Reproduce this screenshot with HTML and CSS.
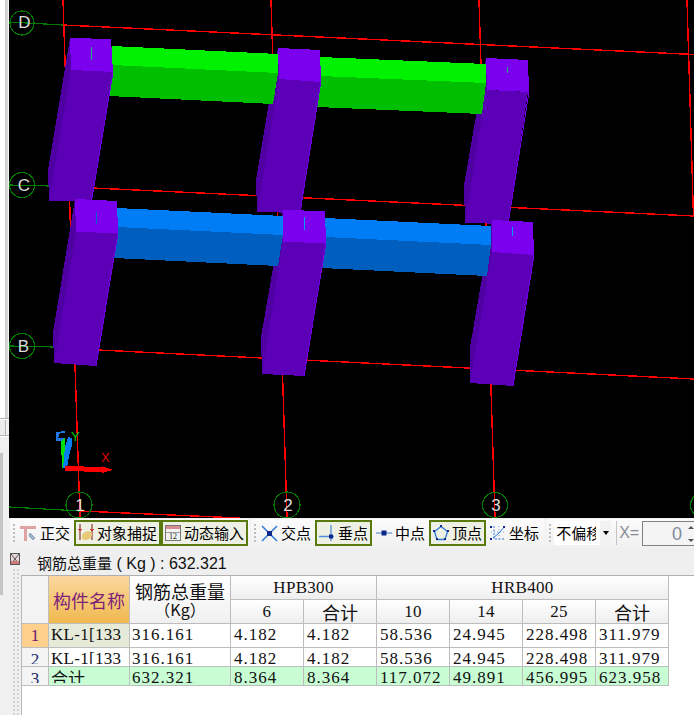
FILE: index.html
```html
<!DOCTYPE html>
<html lang="zh">
<head>
<meta charset="utf-8">
<title>钢筋三维</title>
<link rel="stylesheet" href="styles.css">
</head>
<body>
<div class="app">
  <aside class="rail">
    <div class="rail-top"></div>
    <div class="rail-box"></div>
    <div class="rail-panel"><div class="rail-scroll"></div></div>
  </aside>
  <main class="main">
    <svg class="scene" width="685" height="518" viewBox="9 0 685 518" xmlns="http://www.w3.org/2000/svg">
      <g class="grid-red">
        <polyline points="63,25 694,54.5"/>
        <polyline points="93,188 694,216"/>
        <polyline points="98,350 694,379"/>
        <polyline points="80,511 240,518"/>
        <polyline points="63,0 80,518"/>
        <polyline points="271,0 287,518"/>
        <polyline points="479,0 495,518"/>
        <polyline points="687,0 693.5,217"/>
      </g>
      <g class="grid-green">
        <polyline points="9,22 63,25"/>
        <polyline points="9,185 50,186"/>
        <polyline points="9,346 54,347"/>
        <polyline points="9,507 80,511"/>
        <circle cx="22" cy="23" r="12"/>
        <circle cx="22" cy="185" r="12.5"/>
        <circle cx="22" cy="346" r="12.5"/>
        <circle cx="79" cy="505" r="13"/>
        <circle cx="287" cy="505" r="13"/>
        <circle cx="495" cy="505" r="12.5"/>
        <circle cx="703" cy="505" r="12.5"/>
      </g>
      <g class="side">
        <polygon points="70,38 71,70 49,201 48,170"/>
        <polygon points="278,48 279,79 257,212 256,180"/>
        <polygon points="486,58 487,90 465,223 464,185"/>
      </g>
      <polygon class="beam-g-top" points="112,46 278,54 278,73 112,65"/>
      <polygon class="beam-g-low" points="112,65 278,73 273,104 109,96"/>
      <polygon class="beam-g-top" points="320,57 486,64 486,83 320,76"/>
      <polygon class="beam-g-low" points="320,76 486,83 482,114 317,107"/>
      <g class="front">
        <polygon points="71,70 113,72 91.5,201 49,201"/>
        <polygon points="279,79 321,81 300,213 257,212"/>
        <polygon points="486,90 528,92 508,224 465,223"/>
      </g>
      <g class="edge">
        <polyline points="113,72 91.5,201"/>
        <polyline points="321,81 300,213"/>
        <polyline points="529,92 508,224"/>
      </g>
      <g class="cap">
        <polygon points="70,38 111,39 113,72 71,70"/>
        <polygon points="278,48 320,50 321,82 279,79"/>
        <polygon points="486,58 528,60 529,92 487,90"/>
      </g>
      <g class="side">
        <polygon points="75,199 76,232 54,363 53,332"/>
        <polygon points="283,210 283,242 262,374 261,337"/>
        <polygon points="492,220 492,252 470,383 470,347"/>
      </g>
      <polygon class="beam-b-top" points="117,208 283,216 283,235 117,227"/>
      <polygon class="beam-b-low" points="117,227 283,235 278,266 114,258"/>
      <polygon class="beam-b-top" points="325,218 491,226 491,245 325,237"/>
      <polygon class="beam-b-low" points="325,237 491,245 487,276 322,268"/>
      <g class="front">
        <polygon points="76,232 118,233 96,366 54,363"/>
        <polygon points="283,242 326,243 304,376 262,374"/>
        <polygon points="492,252 534,255 513,386 470,383"/>
      </g>
      <g class="edge">
        <polyline points="118,233 96,366"/>
        <polyline points="326,243 304,376"/>
        <polyline points="534,255 513,386"/>
      </g>
      <g class="cap">
        <polygon points="75,199 117,201 118,233 76,232"/>
        <polygon points="283,210 325,211 326,243 283,242"/>
        <polygon points="492,220 533,222 534,255 492,252"/>
      </g>
      <line class="tick-g" x1="91.5" y1="47" x2="91.5" y2="60"/>
      <line class="tick-g" x1="507.5" y1="67" x2="507.5" y2="73"/>
      <line class="tick-b" x1="96.5" y1="212" x2="96.5" y2="224"/>
      <line class="tick-c" x1="304.5" y1="217" x2="304.5" y2="230"/>
      <line class="tick-c" x1="512.5" y1="227" x2="512.5" y2="236"/>
      <g class="axis">
        <polygon class="ax-cyan" points="56,432 65,431 65,433 60,433 58,438 65,438 65,441 56,441"/>
        <polygon class="ax-green" points="61,441 65,438 67,468 62,468"/>
        <polygon class="ax-blue" points="68,437 72,438 72,445 69,456 67,468 63,468 65,447"/>
        <polygon class="ax-red" points="65,466 102,467 102,466 113,470 102,473 102,472 65,471"/>
        <text class="ax-x" x="101" y="462">X</text>
        <text class="ax-y" x="71" y="441">Y</text>
      </g>
      <g class="grid-label">
        <text x="24.5" y="28">D</text>
        <text x="24" y="191">C</text>
        <text x="23.5" y="352">B</text>
        <text x="80" y="511">1</text>
        <text x="288" y="511">2</text>
        <text x="496" y="511">3</text>
      </g>
    </svg>

    <div class="toolbar">
      <div class="tb">
        <span class="grip"></span>
        <div class="tool">
          <svg width="17" height="18" viewBox="0 0 17 18"><path d="M0 2h16v3H7v12H4V5H0z" fill="#e0a3a3"/><path d="M10 9l5 5-2 2-4-4z" fill="#9db1cc" stroke="#6d7d95" stroke-width=".6"/></svg>
          <span>正交</span>
        </div>
        <div class="tool on">
          <svg width="16" height="20" viewBox="0 0 16 20"><path d="M2 1v16M14 1v16" stroke="#8a3a2a" stroke-width="1.2"/><path d="M0 6l2 2 2-2M12 6l2 2 2-2" fill="#c33" stroke="#c33" stroke-width=".8"/><path d="M4 13c1-5 8-6 10-3 1 3-2 7-6 7-3 0-5-1-4-4z" fill="#e8c978"/></svg>
          <span>对象捕捉</span>
        </div>
        <div class="tool on">
          <svg width="16" height="18" viewBox="0 0 16 18"><rect x=".5" y="1.500" width="15" height="15" fill="#f2f2f2" stroke="#777"/><rect x="1" y="2" width="14" height="3" fill="#d98f8f"/><rect x="1" y="8" width="14" height="1" fill="#999"/><text class="ico-num" x="8" y="15">12</text></svg>
          <span>动态输入</span>
        </div>
      </div>
      <div class="tb">
        <span class="grip"></span>
        <div class="tool">
          <svg width="17" height="17" viewBox="0 0 17 17"><path d="M1 1l15 15M16 1L1 16" stroke="#2f79d6" stroke-width="1.500"/><rect x="6" y="6" width="5" height="5" fill="#10288c"/></svg>
          <span>交点</span>
        </div>
        <div class="tool on">
          <svg width="16" height="17" viewBox="0 0 16 17"><path d="M0 11.500h15M12 0v16" stroke="#4d8fd8" stroke-width="1.300"/><rect x="10" y="9.500" width="4" height="4" fill="#10288c"/></svg>
          <span>垂点</span>
        </div>
        <div class="tool">
          <svg width="16" height="8" viewBox="0 0 16 8"><path d="M0 4h16" stroke="#7fa9dc" stroke-width="1.500"/><rect x="5.500" y="1.500" width="5" height="5" fill="#10288c"/></svg>
          <span>中点</span>
        </div>
        <div class="tool on">
          <svg width="16" height="16" viewBox="0 0 16 16"><path d="M8 1.500l6.500 5-2.500 8H4l-2.500-8z" fill="none" stroke="#2f79d6" stroke-width="1.300"/><g fill="#10288c"><rect x="7" y="0" width="2" height="2"/><rect x="0" y="5" width="2" height="2"/><rect x="14" y="5" width="2" height="2"/><rect x="3" y="13" width="2" height="2"/><rect x="11" y="13" width="2" height="2"/></g></svg>
          <span>顶点</span>
        </div>
        <div class="tool">
          <svg width="16" height="16" viewBox="0 0 16 16"><path d="M4 1v13h11" fill="none" stroke="#2f79d6" stroke-dasharray="2 1.500"/><path d="M1 7h14M9 1v13" fill="none" stroke="#7fa9dc" stroke-dasharray="1 2"/><path d="M3 13L9 8l5-6" fill="none" stroke="#2f79d6"/><g fill="#10288c"><rect x="0" y="13" width="2" height="2"/><rect x="13" y="1" width="2" height="2"/><rect x="0" y="1" width="2" height="2"/></g></svg>
          <span>坐标</span>
        </div>
      </div>
      <div class="tb tb-last">
        <span class="grip"></span>
        <div class="select"><span class="select-text">不偏移</span><span class="select-btn"></span></div>
        <span class="sep"></span>
        <span class="xlabel">X=</span>
        <div class="num"><span class="num-val">0</span><span class="spin"></span></div>
      </div>
    </div>

    <div class="lower">
      <div class="gutter">
        <svg class="close-ico" width="10" height="12" viewBox="0 0 10 12"><rect x=".5" y=".5" width="9" height="11" fill="#e8d8d8" stroke="#555"/><path d="M1 1l8 10M9 1L1 11" stroke="#555"/><path d="M1 8h8v3H1z" fill="#d07a7a"/></svg>
        <div class="dots"></div>
      </div>
      <div class="content">
        <div class="title"><span>钢筋总重量</span><span class="title-en"> ( Kg ) : 632.321</span></div>
        <div class="sheet">
          <div class="grid">
            <div class="c corner r2"></div>
            <div class="c h-name r2">构件名称</div>
            <div class="c h h-total r2"><span>钢筋总重量</span><span class="unit">（Kg）</span></div>
            <div class="c h h-en s2">HPB300</div>
            <div class="c h h-en s4">HRB400</div>
            <div class="c h h-en">6</div>
            <div class="c h h-cn">合计</div>
            <div class="c h h-en">10</div>
            <div class="c h h-en">14</div>
            <div class="c h h-en">25</div>
            <div class="c h h-cn">合计</div>

            <div class="c idx idx-on">1</div>
            <div class="c d name-on"><div class="v v-full v2 code">KL-1[133</div></div>
            <div class="c d"><div class="v v-full v2">316.161</div></div>
            <div class="c d"><div class="v v-full">4.182</div></div>
            <div class="c d"><div class="v v-full">4.182</div></div>
            <div class="c d"><div class="v v-full">58.536</div></div>
            <div class="c d"><div class="v v-full">24.945</div></div>
            <div class="c d"><div class="v v-full">228.498</div></div>
            <div class="c d"><div class="v v-full">311.979</div></div>

            <div class="c idx"><div class="n">2</div></div>
            <div class="c d"><div class="v v2 code">KL-1[133</div></div>
            <div class="c d"><div class="v v2">316.161</div></div>
            <div class="c d"><div class="v">4.182</div></div>
            <div class="c d"><div class="v">4.182</div></div>
            <div class="c d"><div class="v">58.536</div></div>
            <div class="c d"><div class="v">24.945</div></div>
            <div class="c d"><div class="v">228.498</div></div>
            <div class="c d"><div class="v">311.979</div></div>

            <div class="c idx"><div class="n">3</div></div>
            <div class="c d sum"><div class="v v2 cn">合计</div></div>
            <div class="c d sum"><div class="v v2">632.321</div></div>
            <div class="c d sum"><div class="v">8.364</div></div>
            <div class="c d sum"><div class="v">8.364</div></div>
            <div class="c d sum"><div class="v">117.072</div></div>
            <div class="c d sum"><div class="v">49.891</div></div>
            <div class="c d sum"><div class="v">456.995</div></div>
            <div class="c d sum"><div class="v">623.958</div></div>
          </div>
        </div>
      </div>
    </div>
  </main>
</div>
</body>
</html>
```
FILE: styles.css
```css
* { box-sizing: border-box; }
html, body { margin: 0; padding: 0; }
body {
  width: 694px;
  height: 715px;
  overflow: hidden;
  background: #f0f0f0;
  font-family: "Noto Sans CJK SC", "Liberation Sans", sans-serif;
  color: #000;
}
.app { display: flex; width: 694px; height: 715px; }

/* left rail */
.rail { width: 9px; flex: none; display: flex; flex-direction: column; background: #fff; }
.rail-top { height: 419px; background: linear-gradient(to right, #fff 5px, #c9c9c9 5px, #dcdcdc 8px, #f4f4f4 8px); border-bottom: 1px solid #b5b5b5; }
.rail-box { height: 16px; margin-top: 1px; background: linear-gradient(to right, #ececec 5px, #b5b5b5 5px, #b5b5b5 6px, #f0f0f0 6px); border-bottom: 1px solid #b5b5b5; }
.rail-panel { flex: 1; padding-top: 16px; background: #f0f0f0; border-top: 1px solid #fff; }
.rail-scroll { width: 3px; height: 142px; background: #c4c4c4; }

.main { width: 685px; flex: none; display: flex; flex-direction: column; overflow: hidden; }

/* 3D scene */
.scene { display: block; flex: none; background: #000; shape-rendering: crispEdges; }
.grid-red polyline { fill: none; stroke: #f00; stroke-width: 1.4; }
.grid-green polyline, .grid-green circle { fill: none; stroke: #007a00; stroke-width: 1.2; }
.side polygon { fill: #4e00a3; }
.front polygon { fill: #5c00b8; }
.cap polygon { fill: #7a00ee; }
.edge polyline { fill: none; stroke: #7000e0; stroke-width: 1; }
.beam-g-top { fill: #00f200; }
.beam-g-low { fill: #00bf00; }
.beam-b-top { fill: #007cf5; }
.beam-b-low { fill: #005fbe; }
.tick-g { stroke: #20b080; stroke-width: 1; }
.tick-b { stroke: #0060d0; stroke-width: 1; }
.tick-c { stroke: #00a0f0; stroke-width: 1; }
.ax-cyan { fill: #1e78e6; }
.ax-green { fill: #00e000; }
.ax-blue { fill: #0080f0; }
.ax-red { fill: #f00; }
.ax-x, .ax-y { font-family: "Liberation Sans", sans-serif; font-size: 13px; text-anchor: start; }
.ax-x { fill: #e00000; }
.ax-y { fill: #00d000; }
.grid-label text {
  font-family: "Liberation Sans", sans-serif;
  font-size: 17px;
  fill: #dcdcdc;
  text-anchor: middle;
  shape-rendering: auto;
}

/* toolbar */
.toolbar { height: 30px; flex: none; display: flex; gap: 1px; padding: 1px 0 0 1px; background: #f0f0f0; }
.tb {
  height: 28px;
  display: flex;
  align-items: center;
  flex: none;
  padding-right: 2px;
  border-radius: 3px;
  background: linear-gradient(#fbfbfb, #f1f1f1);
}
.grip {
  width: 2px;
  height: 18px;
  margin: 0 1px 0 3px;
  flex: none;
  background: repeating-linear-gradient(#bdbdbd 0 2px, transparent 2px 4px);
}
.tool {
  display: flex;
  align-items: center;
  gap: 3px;
  height: 26px;
  padding: 0 2px;
  border: 2px solid transparent;
  font-size: 15px;
  line-height: 20px;
  white-space: nowrap;
}
.tool svg { flex: none; display: block; }
.tool.on { border-color: #5b7a0e; background: #eef0e4; }
.ico-num { font-family: "Liberation Serif", serif; font-size: 8px; text-anchor: middle; fill: #222; }
.tb-last { padding-right: 0; }
.select {
  width: 57px;
  height: 24px;
  margin-left: 2px;
  display: flex;
  background: #fff;
  font-size: 15px;
  line-height: 24px;
  overflow: hidden;
  flex: none;
}
.select-text { width: 42px; margin-right: 4px; flex: none; padding-left: 2px; overflow: hidden; white-space: nowrap; }
.select-btn { flex: 1; position: relative; background: #f2f2f2; }
.select-btn::after {
  content: "";
  position: absolute;
  left: 3px;
  top: 10px;
  border: 3px solid transparent;
  border-top: 4px solid #000;
  border-bottom: 0;
}
.sep { width: 1px; height: 24px; margin: 0 2px 0 5px; background: #c4c4c4; flex: none; }
.xlabel { width: 23px; flex: none; font-family: "Liberation Sans", sans-serif; font-size: 16px; color: #868c94; }
.num {
  width: 60px;
  height: 25px;
  flex: none;
  display: flex;
  border: 1px solid #808080;
  background: #f4f4f4;
  font-family: "Liberation Sans", sans-serif;
  font-size: 18px;
  line-height: 25px;
  color: #7f8b9c;
}
.num-val { width: 39px; text-align: right; flex: none; }
.spin {
  width: 8px;
  margin-left: 6px;
  flex: none;
  display: flex;
  flex-direction: column;
  justify-content: space-between;
  padding: 4px 0 3px;
}
.spin::before, .spin::after {
  content: "";
  width: 0;
  height: 0;
  border-left: 3px solid transparent;
  border-right: 3px solid transparent;
}
.spin::before { border-bottom: 3px solid #555; }
.spin::after { border-top: 3px solid #555; }

/* lower panel */
.lower { flex: 1; display: flex; min-height: 0; }
.gutter { width: 12px; flex: none; padding: 5px 0 0 1px; background: #f0f0f0; display: flex; flex-direction: column; }
.close-ico { display: block; flex: none; }
.dots {
  flex: 1;
  margin: 3px 0 0 2px;
  width: 8px;
  background-image: radial-gradient(circle, #d2d2d2 1px, transparent 1.3px);
  background-size: 4px 4px;
}
.content { flex: 1; display: flex; flex-direction: column; min-width: 0; }
.title {
  height: 27px;
  flex: none;
  padding-left: 16px;
  background: #efefef;
  font-size: 15px;
  line-height: 30px;
  color: #111;
  white-space: pre;
}
.title-en { font-family: "Liberation Sans", sans-serif; font-size: 16px; }
.sheet { flex: 1; background: #fff; border-left: 1px solid #b8b8b8; border-top: 1px solid #b0b0b0; }
.grid {
  display: grid;
  grid-template-columns: 27px 81px 101px repeat(6, 73px);
  grid-template-rows: 24px 24px 24px 19px 19px;
  font-family: "Liberation Serif", "Noto Sans CJK SC", serif;
  color: #111;
}
.c { border-right: 1px solid #bdbdbd; border-bottom: 1px solid #bdbdbd; overflow: hidden; min-width: 0; }
.r2 { grid-row: span 2; }
.s2 { grid-column: span 2; }
.s4 { grid-column: span 4; }
.corner { background: #f3f3f3; }
.h { display: flex; align-items: center; justify-content: center; background: linear-gradient(#fff, #eeeeee); }
.h-en { font-size: 17px; letter-spacing: .3px; }
.h-cn { font-family: "Noto Sans CJK SC", sans-serif; font-size: 18px; }
.h-total {
  flex-direction: column;
  font-family: "Noto Sans CJK SC", sans-serif;
  font-size: 18px;
  line-height: 18px;
  background: linear-gradient(#fff, #f0f0f0);
}
.unit { font-size: 16px; }
.h-name {
  display: flex;
  align-items: center;
  justify-content: center;
  background: linear-gradient(#fbd89f, #f0b84e);
  color: #7e1f78;
  font-family: "Noto Sans CJK SC", sans-serif;
  font-size: 18px;
}
.idx { background: #f4f4f4; text-align: center; font-size: 17px; line-height: 23px; color: #1a2a6c; }
.idx-on { background: #fdd08b; color: #6a1070; }
.n { height: 16px; overflow: hidden; }
.d { background: #fff; }
.name-on { background: #e6ead9; }
.sum { background: #c8fdd4; }
.v {
  height: 16px;
  padding-left: 3px;
  overflow: hidden;
  font-size: 17px;
  letter-spacing: 1px;
  line-height: 22px;
  white-space: nowrap;
}
.v-full { height: 23px; }
.v2 { padding-left: 2px; }
.code { letter-spacing: .3px; }
.cn { font-family: "Noto Sans CJK SC", sans-serif; font-size: 17px; letter-spacing: 0; }
```
